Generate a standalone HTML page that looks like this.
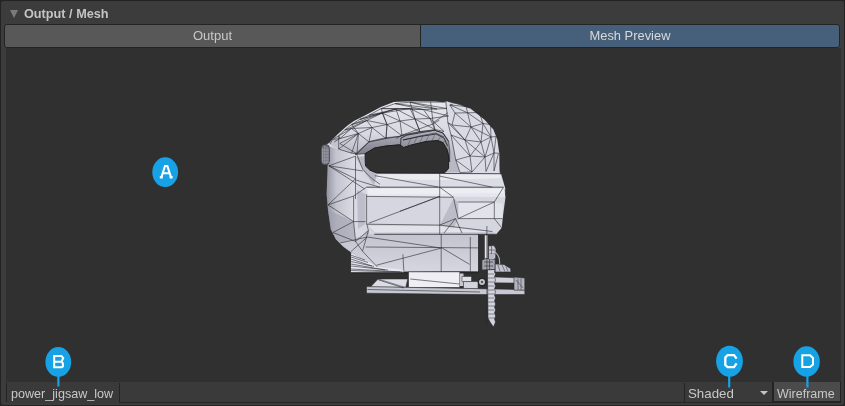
<!DOCTYPE html>
<html><head><meta charset="utf-8">
<style>
html,body{margin:0;padding:0;background:#242424;width:845px;height:406px;overflow:hidden;}
body{position:relative;font-family:"Liberation Sans",sans-serif;}
.a{position:absolute;}
#panel{left:0;top:0;width:843px;height:404px;border:1px solid #232323;border-radius:3px;background:#3c3c3c;}
#tri{left:9.7px;top:10px;width:0;height:0;border-left:4.6px solid transparent;border-right:4.6px solid transparent;border-top:8px solid #7b7b7b;}
#hdr{left:24px;top:5.8px;font-size:12.7px;font-weight:bold;color:#c4c4c4;line-height:16px;white-space:nowrap;}
.tab{top:24px;height:22px;border:1px solid #242424;font-size:12.5px;color:#c8c8c8;text-align:center;line-height:22px;white-space:nowrap;}
#t1{left:4px;width:415px;background:#585858;border-radius:3px 0 0 3px;}
#t2{left:420px;width:418px;background:#46607c;color:#d8d8d8;border-radius:0 3px 3px 0;}
#prev{left:6px;top:48px;width:835px;height:334px;background:#303030;}
#tb{left:6px;top:382px;width:835px;height:21px;background:#3a3a3a;}
.txt{font-size:12.5px;color:#c8c8c8;line-height:16px;white-space:nowrap;}
.a{will-change:transform;}
</style></head><body>
<div id="panel" class="a"></div>
<div id="tri" class="a"></div>
<div id="hdr" class="a">Output / Mesh</div>
<div id="t1" class="a tab" style="font-size:13px">Output</div>
<div id="t2" class="a tab" style="font-size:12.9px">Mesh Preview</div>
<div id="prev" class="a"></div>
<div id="tb" class="a"></div>
<!-- toolbar items -->
<div class="a" style="left:6px;top:383px;width:1px;height:19px;background:#242424"></div>
<div class="a" style="left:119px;top:383px;width:1px;height:19px;background:#242424"></div>
<div class="a" style="left:119px;top:402px;width:565px;height:1px;background:#242424"></div>
<div class="a txt" style="left:11px;top:386px;font-size:12.6px">power_jigsaw_low</div>
<div class="a" style="left:684px;top:383px;width:1px;height:19px;background:#242424"></div>
<div class="a" style="left:684px;top:402px;width:90px;height:1px;background:#242424"></div>
<div class="a txt" style="left:688px;top:386px;font-size:13.3px">Shaded</div>
<div class="a" style="left:760px;top:391px;width:0;height:0;border-left:4px solid transparent;border-right:4px solid transparent;border-top:4.5px solid #c4c4c4"></div>
<div class="a" style="left:772px;top:382px;width:2px;height:20px;background:#242424"></div>
<div class="a" style="left:774px;top:382px;width:66px;height:19px;background:#4b4b4b"></div>
<div class="a" style="left:840px;top:382px;width:1px;height:21px;background:#242424"></div>
<div class="a" style="left:774px;top:401px;width:67px;height:2px;background:#242424"></div>
<div class="a txt" style="left:777px;top:386px;font-size:12.5px">Wireframe</div>

<svg class="a" style="left:0;top:0" width="845" height="406" viewBox="0 0 845 406">
<defs>
<linearGradient id="gFront" x1="0" y1="0" x2="1" y2="0">
<stop offset="0" stop-color="#9494a2"/><stop offset="0.18" stop-color="#c4c4d0"/><stop offset="0.5" stop-color="#dadae4"/><stop offset="1" stop-color="#d4d4de"/>
</linearGradient>
<linearGradient id="gTop" x1="0" y1="0" x2="0" y2="1">
<stop offset="0" stop-color="#e2e2ea"/><stop offset="1" stop-color="#d2d2dc"/>
</linearGradient>
<linearGradient id="gHandle" gradientUnits="userSpaceOnUse" x1="0" y1="102" x2="0" y2="155">
<stop offset="0" stop-color="#e6e6ee"/><stop offset="0.6" stop-color="#d8d8e2"/><stop offset="1" stop-color="#b8b8c4"/>
</linearGradient>
<linearGradient id="gGrip" x1="0" y1="0" x2="0" y2="1">
<stop offset="0" stop-color="#b4b4c0"/><stop offset="1" stop-color="#6e6e7a"/>
</linearGradient>
<linearGradient id="gLow" x1="0" y1="0" x2="0" y2="1">
<stop offset="0" stop-color="#c4c4d0"/><stop offset="1" stop-color="#d6d6e0"/>
</linearGradient>
<linearGradient id="gKnob" x1="0" y1="0" x2="1" y2="0">
<stop offset="0" stop-color="#60606c"/><stop offset="1" stop-color="#b8b8c4"/>
</linearGradient>
</defs>
<g id="mesh" stroke-linejoin="round">
<path fill="url(#gTop)" stroke="#3c3c44" stroke-width="0.9" d="M321,150 L325,145 L330,142 L338,134 L347,126 L354,121 L364,116 L381,107 L394,102 L415,101.2 L435,101.4 L443,102.2 L447.8,101.4 L460,104.5 L470.6,108.8 L484.4,119.7 L493.3,129.5 L497.2,139.4 L499.2,153.2 L499.5,170.4 L502.6,179.8 L505.4,189 L505.4,198.3 L502.6,218.6 L501.7,227.8 L496.1,234.3 L478.5,234.3 L478.5,271.6 L351,272.5 L351,252.8 L343.7,247 L335.8,239.1 L330.9,229.3 L328,209.6 L326.7,194.3 L327.8,163.3 L321,161 Z"/>
<path fill="url(#gHandle)" d="M330,142 L338,134 L347,126 L354,121 L364,116 L381,107 L394,102 L415,101.2 L435,101.4 L443,102.2 L447.8,101.4 L451,128.3 L455.8,160 L460,172.6 L446,172.6 L447.6,154.8 L444.9,145.3 L438,139.9 L431.3,140.6 L417.8,142.6 L406.9,146.7 L390.7,146.7 L377.1,149.4 L367.6,152.8 L357,154.8 L338.7,150.2 Z"/>
<path fill="#dadae4" d="M444.4,101.7 L453.3,103.9 L470.6,108.8 L484.4,119.7 L493.3,129.5 L497.2,139.4 L499.2,153.2 L499.5,172 L460,172.6 L451,128.3 Z"/>
<path fill="url(#gFront)" d="M327.8,163.3 L327.4,145.9 L339.2,148.9 L352.5,154.8 L357,154.8 L364.3,172.2 L374.3,185.5 L366.6,194.3 L366.6,223.2 L375.4,229.8 L378.3,267 L365.5,260.6 L351,252 L343.7,247 L335.8,239.1 L330.9,229.3 L328,209.6 L326.7,194.3 Z"/>
<path fill="#9c9cac" opacity="0.6" d="M328,209.6 L330.9,229.3 L335.8,239.1 L343.7,247 L351,252 L365.5,260.6 L378.3,267 L368.4,230.5 L355.6,241.4 L353.6,221.6 Z"/>
<path fill="#c4c4d0" d="M329.2,144.4 L332.6,139 L338.7,135.6 L338.7,149.1 Z"/>
<rect x="321.1" y="144.4" width="8.3" height="20.5" rx="3.5" ry="4" fill="#6a6a76" stroke="#2a2a2e" stroke-width="0.6"/>
<path fill="none" stroke="#b4b4c0" stroke-width="0.5" d="M322.5,148 V162 M324.3,146 V164 M326.1,146 V164 M327.9,147 V163 M322,150 H329 M322,153 H329 M322,156 H329 M322,159 H329 M322,162 H329"/>
<path fill="url(#gGrip)" stroke="#2a2a30" stroke-width="0.6" d="M355,154.4 L369,141.6 L386,137.7 L399.6,136.5 L402.3,135 L420,131.5 L434.8,130.3 L443,133 L448.6,141.3 L449.7,150 L449.7,162 L448.6,156 L447,149.6 L443,142.7 L437.8,140.6 L426,141.5 L410.6,145.2 L403.7,147.5 L399.6,144.8 L386,146 L374.6,148 L365.1,153.7 Z"/>
<path fill="none" stroke="#2a2a30" stroke-width="0.9" d="M400.5,146 L401,138 L407,135.1 L434.8,130.3 L443,133 L448.6,141.3 M403,140 L420,136.5 L436,134 L444,138 L447.5,146"/>
<path fill="none" stroke="#4a4a54" stroke-width="0.5" d="M408,145 L411,138 M414,143.5 L417,137 M420,142 L423,136 M426,141 L429,135 M432,140.5 L435,134.5 M438,140.5 L441,136 M443,143 L446,140"/>
<path fill="#b8b8c4" d="M355.5,156.7 L364.2,156.2 L364.9,165.7 L370.3,171.1 L377.1,173.1 L374.3,185.5 L364.3,172.2 Z"/>
<path fill="#303030" stroke="#1e1e1e" stroke-width="1" d="M365.1,153.7 L374.6,148 L386,146 L399.6,144.8 L403.7,147.5 L410.6,145.2 L426,141.5 L437.8,140.6 L443,142.7 L447,149.6 L448.6,156 L448.6,168.4 L445,172.6 L376.8,173 L370,170.3 L365.5,166 L365.1,160 Z"/>
<path fill="#dcdce6" d="M374.3,185.5 L377.1,173.1 L501,173.7 L505.4,189 L366.6,194.3 Z"/>
<path fill="#e6e6ee" d="M366.6,187.2 L503.5,187.2 L505.4,197 L366.6,196.4 Z"/>
<path fill="#d6d6e0" d="M366.6,196.4 L505.4,197 L502.6,218.6 L501.7,227.8 L496.1,234.3 L375.4,234.3 L366.6,223.2 Z"/>
<path fill="#c8c8d4" d="M366.6,224.2 L439.7,225.1 L492.4,231.5 L496.1,234.3 L375.4,234.3 Z"/>
<path fill="#e2e2ea" d="M458.2,202 L494.3,202 L502.6,204 L502.6,218.6 L458.2,218.6 Z"/>
<path fill="#bcbcc8" d="M453.6,198.3 L458.2,202 L458.2,218.6 L453,230 L440,225 Z"/>
<path fill="#eeeef4" opacity="0.8" d="M378,174.5 L446,174 L500,174.5 L501.5,178 L440,180 L378,179 Z"/>
<path fill="#f0f0f6" opacity="0.7" d="M368,189 L503,189 L504.5,193 L368,194.5 Z"/>
<path fill="#ececf2" opacity="0.7" d="M368,225.5 L440,226 L492,232 L375,232.5 Z"/>
<path fill="#b4b4c2" opacity="0.7" d="M357,190 L365.5,194 L365.5,224 L358,229 Z"/>
<path fill="url(#gLow)" d="M367.3,234.2 L478.5,234.2 L478.5,271.6 L402,269.7 L378.3,267 L365.5,260.6 L351,251.5 L339.6,243 Z"/>
<path fill="#e8e8f0" d="M351,253.3 L365.5,260.6 L378.3,267 L402,269.7 L403.8,272.5 L351,272.5 Z"/>
<path fill="none" stroke="#7a7a86" stroke-width="1" d="M351,257 L368,262.5 M351,261.5 L374,266.5 M351,266 L388,270 M351,270.5 L400,272"/>
<path fill="#1e1e22" d="M351,272 L478.5,271.6 L478.5,273.5 L351,273.5 Z" opacity="0.6"/>
<path fill="#eeeef4" stroke="#2a2a2e" stroke-width="0.6" d="M408.5,271.8 L459.8,271.8 L459.8,287.6 L408.5,287.6 Z"/>
<path fill="#c8c8d2" d="M459.8,273.5 L463.5,273.5 L463.5,286 L459.8,286 Z"/>
<path fill="#e0e0e8" stroke="#2a2a2e" stroke-width="0.5" d="M462,276.5 L471.5,276.5 L471.5,281.6 L462,281.6 Z"/>
<path fill="#d4d4de" stroke="#2a2a2e" stroke-width="0.5" d="M463.5,281.6 L478,281.6 L478,288.9 L463.5,288.9 Z"/>
<path fill="#dcdce6" stroke="#2a2a2e" stroke-width="0.5" d="M370.5,287 L378.1,279 L407.7,279 L405.7,287.5 Z"/><path fill="none" stroke="#2a2a2e" stroke-width="0.5" d="M378.1,279 L405.7,287.5"/>
<path fill="#c8c8d2" stroke="#2a2a2e" stroke-width="0.6" d="M366.5,286.6 L480,288.7 L518,289.5 L524.8,290 L524.8,294.6 L480,294.6 L366.5,293.2 Z"/>
<path fill="#d0d0da" stroke="#2a2a2e" stroke-width="0.5" d="M493.7,276.9 L516,277.8 L516,283 L493.7,282.8 Z"/>
<path fill="#b4b4c0" stroke="#2a2a2e" stroke-width="0.6" d="M514,277 L524.8,278 L524.8,290.2 L514,290.2 Z"/>
<path fill="none" stroke="#2a2a2e" stroke-width="0.5" d="M516,280 L523,288 M518,278.5 L518,290 M521,278.5 L521,290"/>
<path fill="#d4d4de" stroke="#2a2a2e" stroke-width="0.6" d="M487.5,269.5 L495.2,269.5 L494.5,272 L495.5,274 L494.5,277 L495.5,280 L494.5,283 L495.5,286 L494.5,289 L495.5,292 L494.5,295 L495.5,298 L494.5,301 L495.5,304 L494.5,307 L495.5,310 L494.5,313 L495.5,316 L494.5,319 L495.5,322 L493.5,327 L490,322 L488,318 Z"/>
<path fill="none" stroke="#6a6a76" stroke-width="0.8" d="M488,274 H494 M488,278 H494 M488,282 H494 M488,286 H494 M488,290 H494 M488,294 H494 M488,298 H494 M488,302 H494 M488,306 H494 M488,310 H494 M488,314 H494 M488,318 H494"/>
<path fill="#e4e4ec" stroke="#2a2a2e" stroke-width="0.5" d="M484.5,235 L487.8,235 L487.8,261 L484.5,261 Z"/>
<path fill="#c8c8d4" stroke="#2a2a2e" stroke-width="0.6" d="M488.5,246 L494,245.5 L496,249 L495.5,259 L488.5,259 Z"/><path fill="none" stroke="#2a2a2e" stroke-width="0.5" d="M489,250 L495,250 M489,254 L495,254 M491.5,246 V259"/>
<path fill="none" stroke="#b0b0bc" stroke-width="1.2" d="M494,251.5 Q500.5,255 499.5,265"/>
<path fill="#a4a4b0" stroke="#2a2a2e" stroke-width="0.7" d="M481.9,260 L486,258.5 L495.2,259.2 L495.2,269.5 L481.9,270 Z"/><path fill="none" stroke="#2a2a2e" stroke-width="0.6" d="M484,262 L493,262 M484,266 L493,266 M489.5,259 V270"/>
<path fill="#c4c4d0" stroke="#2a2a2e" stroke-width="0.6" d="M495.2,264 L504,264.5 L510.5,268.5 L511,272 L495.2,272 Z"/><path fill="none" stroke="#2a2a2e" stroke-width="0.5" d="M498,265 L500,271.5 M502,265 L505,271.5 M506,266.5 L508,271.5"/>
<path fill="#b8b8c4" d="M489,254 L494,254 L494,259 L489,259 Z"/>
<circle cx="482" cy="282" r="3.6" fill="#c8c8d2" stroke="#26262a" stroke-width="1.3"/><circle cx="482" cy="282" r="1.2" fill="#50505a"/>
<path fill="none" stroke="#26262c" stroke-width="0.7" stroke-opacity="0.85" d="M330.0,144.0 L332.6,139.5 L338.7,135.8 L344.8,130.0 L351.6,124.6 L359.7,119.5 L369.0,115.3 L381.0,108.6 L395.0,103.6 L410.0,102.2 L425.0,102.0 L445.5,102.2 M334.0,142.0 L340.0,138.5 L351.4,128.5 L366.8,120.5 L382.2,113.0 L396.0,109.0 L410.0,108.5 L423.3,109.5 L437.0,109.0 L447.0,108.5 M339.8,143.5 L358.4,133.5 L372.0,127.5 L387.0,124.5 L400.0,121.0 L415.0,119.0 L430.0,118.5 L448.5,116.0 M338.7,149.1 L351.6,153.2 L357.0,153.9 L369.0,142.0 L386.0,138.6 L402.0,135.8 L420.0,131.8 L435.0,129.5 L444.0,131.5 M332.6,139.5 L340.0,138.5 L338.7,135.8 L351.4,128.5 L344.8,130.0 L366.8,120.5 L351.6,124.6 L382.2,113.0 L359.7,119.5 L396.0,109.0 L369.0,115.3 L410.0,108.5 L381.0,108.6 L423.3,109.5 L395.0,103.6 L437.0,109.0 L410.0,102.2 L447.0,108.5 M340.0,138.5 L358.4,133.5 L351.4,128.5 L372.0,127.5 L366.8,120.5 L387.0,124.5 L382.2,113.0 L400.0,121.0 L396.0,109.0 L415.0,119.0 L410.0,108.5 L430.0,118.5 L423.3,109.5 L448.5,116.0 M339.8,143.5 L357.0,153.9 L358.4,133.5 L369.0,142.0 L372.0,127.5 L386.0,138.6 L387.0,124.5 L402.0,135.8 L400.0,121.0 L420.0,131.8 L415.0,119.0 L435.0,129.5 L430.0,118.5 L444.0,131.5 M338.7,135.8 L338.7,149.1 M351.6,124.6 L358.4,133.5 L351.6,153.2 M338.7,149.1 L358.4,133.5 M381,108.6 L387,124.5 L386,138.6 M410,102.2 L415,119 L420,131.8 M430.6,101.7 L433.1,122.6 L435,129.5 M396,138.6 L402.3,135 L433.1,123.9 L439.3,120.2 M403,140 L420,136 L435.5,133 L444,137 M433.1,122.6 L447.9,112.8 M328.9,165.8 L355.5,156.2 M328.9,165.8 L362.8,171 M328.9,165.8 L364.3,188.7 M355.5,156.2 L355.5,199 M355.5,179.9 L380,187.3 M357,154.8 L362.8,169.5 L371.7,178.4 L380,184.3 M328,204.9 L355.5,178.8 M328,204.9 L353.6,196 M328,204.9 L353.6,221.6 M332.9,232.5 L353.6,221.6 L365.4,221.6 M353.6,196 L353.6,221.6 L355.6,241.4 M332.9,232.5 L355.6,241.4 L368.4,230.5 M355.6,241.4 L362.5,251.2 L368.4,230.5 M362.5,251.2 L377.3,267 M366.6,194.3 L366.6,223.2 L368.4,230.5 M439.7,176.1 L492.4,187.2 M439.7,173.3 L439.7,234.3 M366.6,196.4 L453.6,197.3 M368.8,223.2 L439.7,196.4 M400,211.2 L439.7,196.4 M439.7,187.2 L453.6,197.3 M453.6,198.3 L458.2,218.6 L502.6,218.6 M458.2,202 L494.3,202 M458.2,218.6 L494.3,202 M366.6,224.2 L439.7,225.1 L492.4,231.5 M439.7,225.1 L455.5,218.6 M494.3,202 L503.5,187.2 M494.3,202 L494.3,218.6 L501.7,227.8 M444,233 L455.5,218.6 L462,233 M340,243 L367.3,237 M351,251.5 L367.3,237 M365.5,247 L478,247.9 M367.3,237 L440.3,247.9 M376.5,265.2 L442,247.9 L469.4,264.3 M441.2,234 L441.2,271.6 M470.3,237 L470.3,271.6 M402.9,254.3 L403.8,270.7 M351,255.2 L365,260 M351,259.1 L372,266 M351,264 L385,270 M351,269 L402,272 M410.2,279 L459.4,284 M378.3,279.8 L403.8,288 M367.3,289.5 L480,292 M486.9,226 L486.9,326 M449.9,105.0 L467.6,112.8 L483.0,123.5 L491.0,137.0 L494.0,153.0 L494.0,171.0 M455.0,113.0 L471.0,127.0 L481.0,142.0 L485.0,157.0 L486.0,171.5 M445.9,101.9 L447.9,122.6 L451.0,135.0 L455.8,160.0 L460.0,172.6 M452.0,125.0 L465.0,140.0 L470.0,156.0 L472.0,172.0 M449.9,105.0 L455.0,113.0 L467.6,112.8 L471.0,127.0 L483.0,123.5 L481.0,142.0 L491.0,137.0 L485.0,157.0 L494.0,153.0 L486.0,171.5 M455.0,113.0 L452.0,125.0 L471.0,127.0 L465.0,140.0 L481.0,142.0 L470.0,156.0 L485.0,157.0 L472.0,172.0 M452.0,125.0 L447.9,122.6 L465.0,140.0 L451.0,135.0 L470.0,156.0 L455.8,160.0 L472.0,172.0 L460.0,172.6 M453.3,103.9 L449.9,105.0 L466,106.5 L467.6,112.8 L479.4,112.5 L483.0,123.5 L490.5,124.5 L491.0,137.0 L496,136.5 L494.0,153.0 L498.5,153.2 L494.0,171.0 M465,140 L485,157 M471,127 L491,137 M328.9,165.8 L355.5,178.8 M353.6,196 L366.6,187.2 M374.8,175.7 L438.2,187"/>
<path fill="none" stroke="#1c1c20" stroke-width="1" stroke-opacity="0.75" d="M374.3,234.3 L496.1,234.3 M366.6,187.2 L503.5,187.2 M377,173.3 L501,173.7 M478.5,234 L478.5,272"/>
</g>
<!-- callouts -->
<g fill="#17a2e6">
<ellipse cx="165.2" cy="172.2" rx="12.9" ry="14.9"/>
<ellipse cx="58.3" cy="362" rx="12.9" ry="14.9"/>
<rect x="57.3" y="372" width="2.2" height="14.5"/>
<ellipse cx="729.5" cy="361.2" rx="13.4" ry="15.5"/>
<rect x="728.1" y="372" width="2.2" height="15.5"/>
<ellipse cx="806.6" cy="361.5" rx="13.2" ry="15.3"/>
<rect x="806.3" y="372" width="2.2" height="15.5"/>
</g>
<g fill="none" stroke="#ffffff" stroke-width="2" stroke-linejoin="miter">
<path d="M161.6,176.6 L165,166.1 H167.4 L170.8,176.6 M162.6,173.3 H169.8"/><path fill="#fff" stroke="none" d="M159.8,175.9 h3 v2.6 h-3 Z M169.6,175.9 h3 v2.6 h-3 Z"/>
<path d="M54.2,368.2 V356 H61.5 L63.2,358.2 L61.5,361.8 H54.2 M61.2,361.8 L62.9,363.2 V366.4 L61.6,367.2 H54.2"/>
<path stroke-width="2.3" d="M736.6,358.6 L734,355.1 H727.6 L725.3,357.4 V365 L727.6,367.2 H734 L736.6,363.4"/>
<path d="M802.3,355.3 H810 L813,357.9 V364.5 L810,367 H802.3 Z"/>
</g>
</svg>
</body></html>
